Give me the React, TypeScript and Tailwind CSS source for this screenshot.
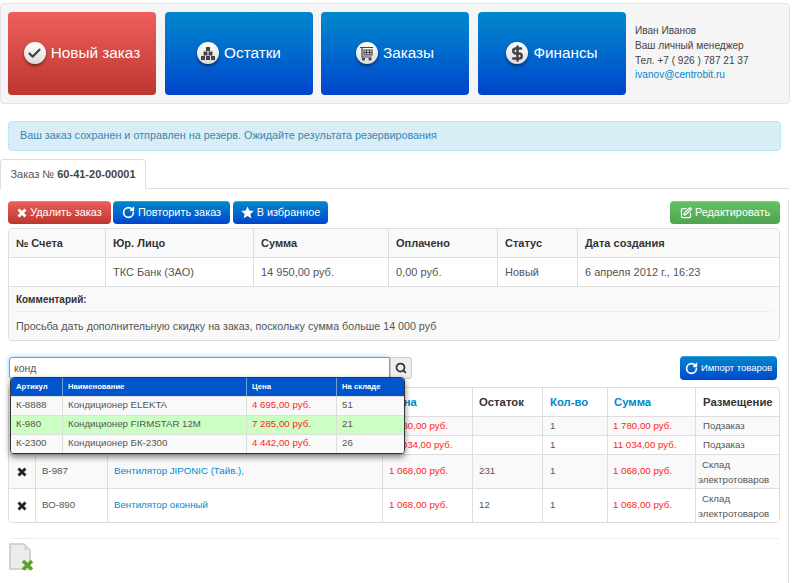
import React from 'react';
import { Check, DollarSign, Search, RotateCw, SquarePen } from 'lucide-react';

const RoundIcon: React.FC<{ children: React.ReactNode }> = ({ children }) => (
  <span className="flex h-[22px] w-[22px] shrink-0 items-center justify-center rounded-full bg-gradient-to-b from-white to-[#dcdcdc] text-[#444] shadow-[0_2px_3px_rgba(0,0,0,0.45)]">
    {children}
  </span>
);

const Blocks = () => (
  <svg width="16" height="14" viewBox="0 0 16 14" fill="#444">
    <rect x="6" y="1" width="4" height="4" />
    <rect x="3.5" y="5.5" width="4" height="4" />
    <rect x="8.5" y="5.5" width="4" height="4" />
    <rect x="1" y="10" width="4" height="4" />
    <rect x="6" y="10" width="4" height="4" />
    <rect x="11" y="10" width="4" height="4" />
  </svg>
);

const Cart = () => (
  <svg width="15" height="15" viewBox="0 0 15 15" fill="none" stroke="#444" strokeWidth="1.2">
    <path d="M1 1.5h13M3 1.5v9.5h9.5" />
    <path d="M5 4h8v5H5zM7.5 4v5M10.5 4v5M5 6.5h8" />
    <circle cx="4.5" cy="13" r="1" fill="#444" />
    <circle cx="11" cy="13" r="1" fill="#444" />
  </svg>
);

// blunt glyphicon style cross
const Cross: React.FC<{ size: number }> = ({ size }) => (
  <svg width={size} height={size} viewBox="0 0 12 12" stroke="currentColor" strokeWidth="3.4" fill="none">
    <path d="M1.8 1.800l8.400 8.400M10.200 1.800l-8.400 8.400" />
  </svg>
);

const SolidStar = () => (
  <svg width="13" height="13" viewBox="0 0 24 24" fill="currentColor">
    <path d="M12 1l3.300 7.500 8.200.8-6.200 5.400 1.900 8.100L12 18.500l-7.200 4.300 1.900-8.100L.500 9.300l8.200-.8z" />
  </svg>
);

const ExcelFile = () => (
  <svg width="26" height="28" viewBox="0 0 26 28">
    <path d="M1 1h14l6 6v19H1z" fill="#ececec" stroke="#c8c8c8" strokeWidth="1.500" />
    <path d="M15 1v6h6z" fill="#d8d8d8" />
    <path d="M14 18l9 8.500M23 18l-9 8.500" stroke="#5aa02c" strokeWidth="3.500" />
  </svg>
);

const navBtn = 'flex h-[83px] w-[148px] items-center justify-center gap-[5px] rounded-[4px] pb-[1px] text-[15.300px] text-white';
const blueGrad = 'bg-gradient-to-b from-[#0088cc] to-[#0044cc]';
const btn = 'flex h-[23px] items-center whitespace-nowrap rounded-[4px] text-[10.900px] text-white shadow-[inset_0_1px_0_rgba(255,255,255,0.2)]';
const infoTh = 'border-r border-[#ddd] px-[7px] text-left font-bold text-[#333]';

const suggestions = [
  { code: 'К-8888', name: 'Кондиционер ELEKTA', price: '4 695,00 руб.', stock: '51', bg: 'bg-[#f9f9f9]' },
  { code: 'К-980', name: 'Кондиционер FIRMSTAR 12M', price: '7 285,00 руб.', stock: '21', bg: 'bg-[#ccffc4]' },
  { code: 'К-2300', name: 'Кондиционер БК-2300', price: '4 442,00 руб.', stock: '26', bg: 'bg-[#f9f9f9]' },
];

const rows = [
  { code: '', name: '', price: '1 780,00 руб.', left: '', sum: '1 780,00 руб.', place: 'Подзаказ', h: 'h-[19px]', bg: 'bg-[#f9f9f9]' },
  { code: '', name: '', price: '11 034,00 руб.', left: '', sum: '11 034,00 руб.', place: 'Подзаказ', h: 'h-[19px]', bg: 'bg-white' },
  { code: 'В-987', name: 'Вентилятор JIPONIC (Тайв.),', price: '1 068,00 руб.', left: '231', sum: '1 068,00 руб.', place: 'Склад', h: 'h-[34px]', bg: 'bg-[#f9f9f9]' },
  { code: 'ВО-890', name: 'Вентилятор оконный', price: '1 068,00 руб.', left: '12', sum: '1 068,00 руб.', place: 'Склад', h: 'h-[33px]', bg: 'bg-white' },
];

export default function App() {
  return (
    <div className="h-[583px] w-[800px] overflow-hidden bg-white pt-[3px] font-['Liberation_Sans',Arial,sans-serif] text-[#555]">
      {/* Header */}
      <div className="flex h-[101px] w-[790px] items-center rounded-[4px] border border-[#e3e3e3] bg-[#f5f5f5] pl-[7px]">
        <a className={`${navBtn} bg-gradient-to-b from-[#ee5f5b] to-[#bd362f]`}>
          <RoundIcon><Check size={15} strokeWidth={3.5} /></RoundIcon>
          Новый заказ
        </a>
        <a className={`${navBtn} ${blueGrad} ml-[9px]`}>
          <RoundIcon><Blocks /></RoundIcon>
          Остатки
        </a>
        <a className={`${navBtn} ${blueGrad} ml-[8px]`}>
          <RoundIcon><Cart /></RoundIcon>
          Заказы
        </a>
        <a className={`${navBtn} ${blueGrad} ml-[9px]`}>
          <RoundIcon><DollarSign size={17} strokeWidth={3.5} /></RoundIcon>
          Финансы
        </a>
        <div className="ml-[9px] text-[10.100px] leading-[14.800px] text-[#444]">
          <div>Иван Иванов</div>
          <div>Ваш личный менеджер</div>
          <div>Тел. +7 ( 926 ) 787 21 37</div>
          <a className="text-[#0088cc]">ivanov@centrobit.ru</a>
        </div>
      </div>

      {/* Alert */}
      <div className="ml-[8px] mt-[17px] flex h-[30px] w-[773px] items-center rounded-[4px] border border-[#bce8f1] bg-[#d9edf7] pb-[1px] pl-[11px] text-[10.800px] text-[#3a87ad]">
        Ваш заказ сохранен и отправлен на резерв. Ожидайте результата резервирования
      </div>

      {/* Tabs */}
      <div className="mt-[8px] flex h-[30px] w-[789px] border-b border-[#ddd]">
        <div className="flex h-[30px] w-[146px] items-center justify-center rounded-t-[4px] border-x border-t border-[#ddd] bg-white text-[11px] text-[#555]">
          Заказ №&nbsp;<b className="text-[#444]">60-41-20-00001</b>
        </div>
      </div>

      <div className="h-[390px] w-[789px] border-r border-b border-[#ddd] pl-[8px] pr-[8px]">
        {/* Actions */}
        <div className="mt-[12px] flex h-[23px]">
          <button className={`${btn} w-[103px] justify-center gap-[3px] bg-gradient-to-b from-[#ee5f5b] to-[#bd362f]`}>
            <Cross size={10} />Удалить заказ
          </button>
          <button className={`${btn} ${blueGrad} ml-[2px] w-[117px] justify-center gap-[3px]`}>
            <RotateCw size={13} strokeWidth={3} />Повторить заказ
          </button>
          <button className={`${btn} ${blueGrad} ml-[3px] w-[95px] justify-center gap-[3px]`}>
            <SolidStar />В избранное
          </button>
          <button className={`${btn} ml-auto w-[110px] justify-center gap-[3px] bg-gradient-to-b from-[#62c462] to-[#51a351]`}>
            <SquarePen size={12} strokeWidth={2.500} />Редактировать
          </button>
        </div>

        {/* Order info */}
        <div className="mt-[4px] w-[772px] overflow-hidden rounded-[4px] border border-[#ddd] text-[11px]">
          <div className="grid h-[29px] grid-cols-[97px_148px_135px_109px_80px_1fr] items-stretch border-b border-[#ddd] bg-[#f9f9f9]">
            {['№ Счета', 'Юр. Лицо', 'Сумма', 'Оплачено', 'Статус', 'Дата создания'].map(t => (
              <div key={t} className={`${infoTh} flex items-center last:border-r-0`}>{t}</div>
            ))}
          </div>
          <div className="grid h-[29px] grid-cols-[97px_148px_135px_109px_80px_1fr] items-stretch border-b border-[#ddd]">
            {['', 'ТКС Банк (ЗАО)', '14 950,00 руб.', '0,00 руб.', 'Новый', '6 апреля 2012 г., 16:23'].map((t, i) => (
              <div key={i} className="flex items-center border-r border-[#ddd] px-[7px] last:border-r-0">{t}</div>
            ))}
          </div>
          <div className="h-[53px] bg-[#f9f9f9] px-[7px]">
            <div className="flex h-[25px] items-center border-b border-[#eee] text-[10px] font-bold text-[#333]">Комментарий:</div>
            <div className="flex h-[28px] items-center text-[10.700px]">Просьба дать дополнительную скидку на заказ, поскольку сумма больше 14 000 руб</div>
          </div>
        </div>

        {/* Search + import */}
        <div className="relative mt-[15px] flex h-[24px] items-center">
          <input
            readOnly
            value="конд"
            className="ml-[1px] h-[22px] w-[381px] rounded-l-[3px] border border-[#52a8ec] bg-white px-[4px] text-[10.500px] text-[#555] shadow-[0_0_5px_rgba(82,168,236,0.6)] outline-none"
          />
          <span className="flex h-[22px] w-[22px] items-center justify-center rounded-r-[3px] border border-[#ccc] bg-[#eee] text-[#333]">
            <Search size={12} strokeWidth={3.500} />
          </span>
          <button className={`${btn} ${blueGrad} ml-auto mr-[3px] !h-[24px] w-[97px] justify-center gap-[3px] !text-[9.500px]`}>
            <RotateCw size={13} strokeWidth={3} />Импорт товаров
          </button>

          {/* Autocomplete */}
          <div className="absolute left-[2px] top-[21px] z-10 w-[395px] overflow-hidden rounded-[4px] border border-[#333] bg-white text-[9.700px] shadow-[0_3px_6px_rgba(0,0,0,0.5)]">
            <div className="grid h-[18px] grid-cols-[52px_184px_90px_1fr] bg-[#0055cc] text-[7.700px] font-bold text-white">
              {['Артикул', 'Наименование', 'Цена', 'На складе'].map(t => (
                <div key={t} className="flex items-center border-r border-[#6f9fe0] pl-[5px] last:border-r-0">{t}</div>
              ))}
            </div>
            {suggestions.map(s => (
              <div key={s.code} className={`grid h-[19px] grid-cols-[52px_184px_90px_1fr] border-t border-[#ddd] ${s.bg}`}>
                <div className="flex items-center border-r border-[#ddd] pb-[1px] pl-[5px]">{s.code}</div>
                <div className="flex items-center border-r border-[#ddd] pb-[1px] pl-[5px]">{s.name}</div>
                <div className="flex items-center border-r border-[#ddd] pb-[1px] pl-[5px] text-[#ff2222]">{s.price}</div>
                <div className="flex items-center pb-[1px] pl-[5px]">{s.stock}</div>
              </div>
            ))}
          </div>
        </div>

        {/* Items */}
        <div className="mt-[7px] w-[772px] overflow-hidden rounded-[4px] border border-[#ddd] text-[9.700px]">
          <div className="grid h-[29px] grid-cols-[27px_72px_275px_90px_70px_65px_88px_1fr] border-b border-[#ddd] text-[11.300px] font-bold">
            {[
              ['', ''],
              ['', ''],
              ['', ''],
              ['Цена', 'text-[#0088cc] pl-[6px]'],
              ['Остаток', 'text-[#333] pl-[6px]'],
              ['Кол-во', 'text-[#0088cc] pl-[7px]'],
              ['Сумма', 'text-[#0088cc] pl-[6px]'],
              ['Размещение', 'text-[#333] pl-[7px]'],
            ].map(([t, c], i) => (
              <div key={i} className={`flex items-center border-r border-[#ddd] last:border-r-0 ${c}`}>{t}</div>
            ))}
          </div>
          {rows.map((r, i) => (
            <div key={i} className={`grid ${r.h} grid-cols-[27px_72px_275px_90px_70px_65px_88px_1fr] border-b border-[#ddd] last:border-b-0 ${r.bg}`}>
              <div className="flex items-center justify-center border-r border-[#ddd] text-[#222]">
                <Cross size={10} />
              </div>
              <div className="flex items-center border-r border-[#ddd] pl-[6px]">{r.code}</div>
              <div className="flex items-center border-r border-[#ddd] pl-[6px] text-[#0088cc]">{r.name}</div>
              <div className="flex items-center border-r border-[#ddd] pl-[6px] text-[#ff2222]">{r.price}</div>
              <div className="flex items-center border-r border-[#ddd] pl-[6px]">{r.left}</div>
              <div className="flex items-center border-r border-[#ddd] pl-[7px]">1</div>
              <div className="flex items-center border-r border-[#ddd] pl-[5px] text-[#ff2222]">{r.sum}</div>
              {r.place === 'Склад' ? (
                <div className="flex flex-col justify-center pl-[2px] leading-[15px]">
                  <span className="pl-[4px]">Склад</span>
                  <span>электротоваров</span>
                </div>
              ) : (
                <div className="flex items-center pl-[7px]">{r.place}</div>
              )}
            </div>
          ))}
        </div>

        <div className="ml-[4px] mt-[15px] w-[768px] border-t border-[#eee]" />
        <div className="ml-[1px] mt-[4px]"><ExcelFile /></div>
      </div>
    </div>
  );
}
